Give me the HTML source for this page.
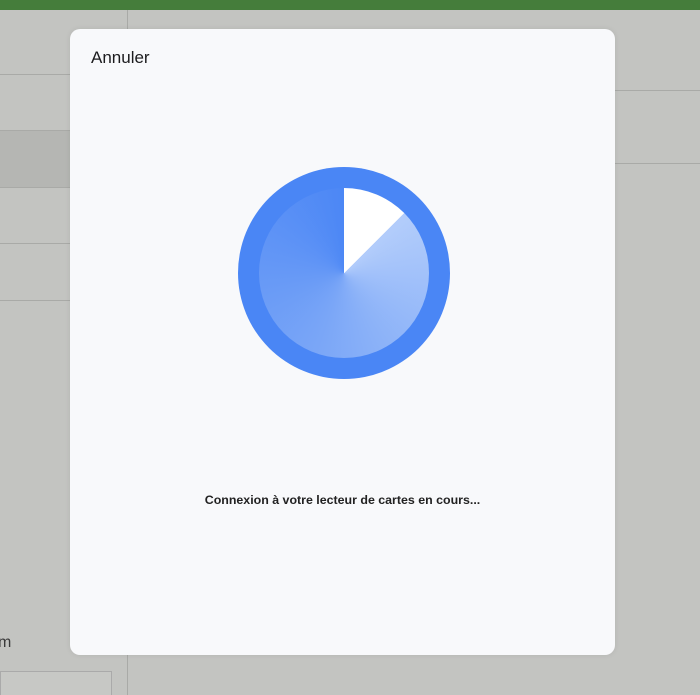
<!DOCTYPE html>
<html><head><meta charset="utf-8"><style>
html,body{margin:0;padding:0;width:700px;height:695px;overflow:hidden;background:#c3c4c1;font-family:"Liberation Sans",sans-serif;position:relative}
.green{position:absolute;left:0;top:0;width:700px;height:10px;background:#457d3b}
.vl{position:absolute;left:127px;top:10px;width:1px;height:685px;background:#a9aaa7}
.hl{position:absolute;height:1px;background:#a9aaa7}
.band{position:absolute;left:0;top:131px;width:127px;height:56px;background:#b5b6b3}
.m{position:absolute;left:-2px;top:634px;font-size:16px;color:#3a3a3a}
.box{position:absolute;left:0;top:671px;width:110px;height:30px;border:1px solid #aaa;background:#c7c8c5}
.dlg{position:absolute;left:70px;top:29px;width:545px;height:626px;background:#f8f9fb;border-radius:10px;box-shadow:0 0 6px rgba(0,0,0,.08)}
.cancel{position:absolute;left:21px;top:19px;font-size:17px;color:#1c1c1e}
.outer{position:absolute;left:168px;top:138px;width:212px;height:212px;border-radius:50%;background:#4a86f5}
.inner{position:absolute;left:21px;top:21px;width:170px;height:170px;border-radius:50%;background:conic-gradient(#fff 0deg 45deg,#b3cdfb 45deg,#7aa6f7 200deg,#4c87f5 360deg)}
.msg{position:absolute;left:0;width:545px;top:464px;text-align:center;font-size:12.4px;font-weight:bold;color:#222}
</style></head><body>
<div class="green"></div>
<div class="vl"></div>
<div class="band"></div>
<div class="hl" style="left:0;top:74px;width:127px"></div>
<div class="hl" style="left:0;top:130px;width:127px"></div>
<div class="hl" style="left:0;top:187px;width:127px"></div>
<div class="hl" style="left:0;top:243px;width:127px"></div>
<div class="hl" style="left:0;top:300px;width:127px"></div>
<div class="hl" style="left:615px;top:90px;width:85px"></div>
<div class="hl" style="left:615px;top:163px;width:85px"></div>
<div class="m">m</div>
<div class="box"></div>
<div class="dlg">
<div class="cancel">Annuler</div>
<div class="outer"><div class="inner"></div></div>
<div class="msg">Connexion à votre lecteur de cartes en cours...</div>
</div>
</body></html>
